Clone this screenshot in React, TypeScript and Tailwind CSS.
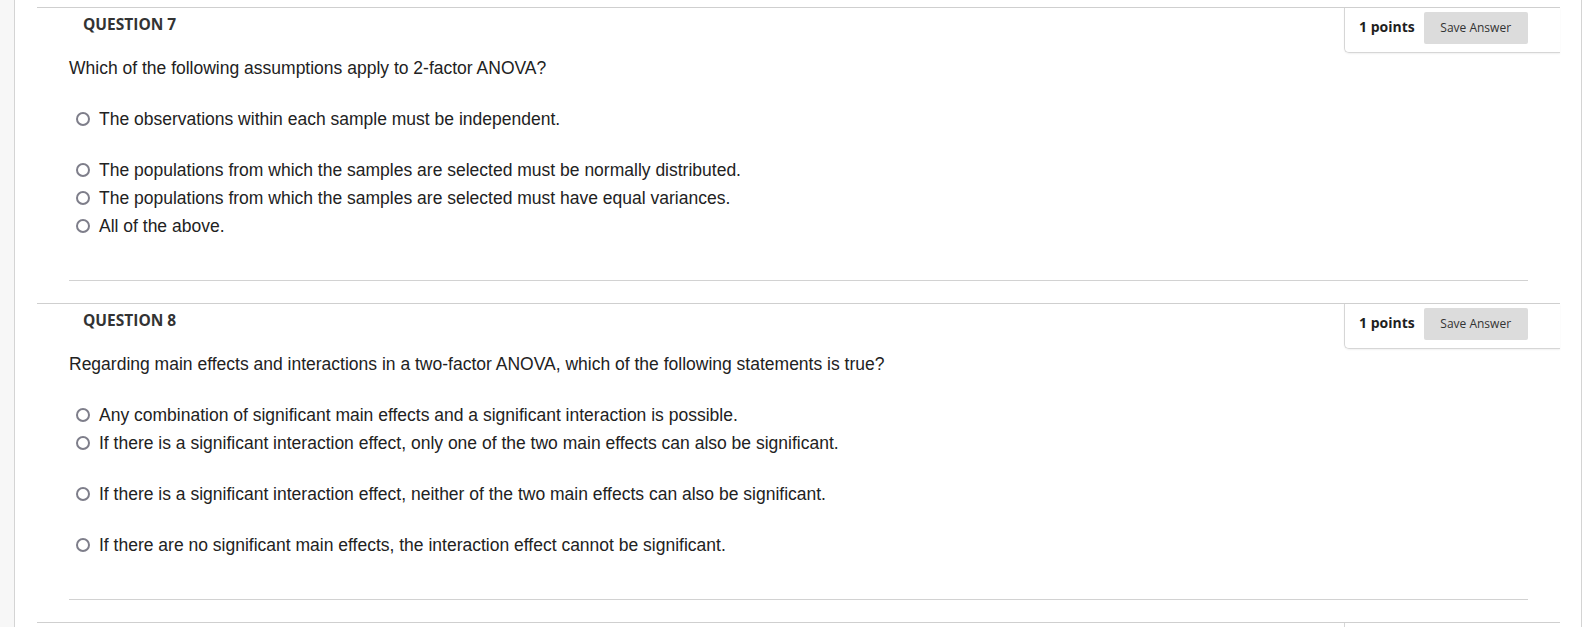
import React from 'react';

type Question = {
  number: number;
  text: string;
  // gapBefore: extra blank space above an option, as in the source markup
  options: { label: string; gapBefore?: boolean }[];
};

const questions: Question[] = [
  {
    number: 7,
    text: 'Which of the following assumptions apply to 2-factor ANOVA?',
    options: [
      { label: 'The observations within each sample must be independent.' },
      { label: 'The populations from which the samples are selected must be normally distributed.', gapBefore: true },
      { label: 'The populations from which the samples are selected must have equal variances.' },
      { label: 'All of the above.' },
    ],
  },
  {
    number: 8,
    text: 'Regarding main effects and interactions in a two-factor ANOVA, which of the following statements is true?',
    options: [
      { label: 'Any combination of significant main effects and a significant interaction is possible.' },
      { label: 'If there is a significant interaction effect, only one of the two main effects can also be significant.' },
      { label: 'If there is a significant interaction effect, neither of the two main effects can also be significant.', gapBefore: true },
      { label: 'If there are no significant main effects, the interaction effect cannot be significant.', gapBefore: true },
    ],
  },
];

function PointsBox() {
  return (
    <div className="h-[45px] w-[216px] border-l border-b border-[#d6d6d6] rounded-bl-[5px] shadow-[0_1px_2px_rgba(0,0,0,0.06)] font-['Open_Sans',sans-serif]">
      <div className="flex items-center h-[32px] mt-[4px]">
        <span className="pl-[14px] pb-[3px] text-[14px] font-bold text-[#1f1f1f]">1 points</span>
        <button className="ml-[9px] w-[104px] h-[32px] bg-[#dcdcdc] rounded-[2px] text-[12px] text-[#333]">
          Save Answer
        </button>
      </div>
    </div>
  );
}

function QuestionBlock({ q }: { q: Question }) {
  return (
    <div className="border-t border-[#cfcfcf] mb-[22px]">
      <div className="flex justify-between items-start">
        <h3 className="pl-[46px] pt-[5px] leading-[22px] text-[15.5px] font-bold text-[#333] font-['Open_Sans',sans-serif]">
          QUESTION {q.number}
        </h3>
        <PointsBox />
      </div>
      <div className="px-[32px] font-['Liberation_Sans',Arial,sans-serif] text-[17.5px] text-[#222]">
        <p className="mt-[5px] leading-[20px]">{q.text}</p>
        <div className="mt-[27px]">
          {q.options.map((o) => (
            <label key={o.label} className={`flex items-center h-[28px] ${o.gapBefore ? 'mt-[23px]' : ''}`}>
              <span className="ml-[7px] w-[14px] h-[14px] rounded-full border-2 border-[#7e7e8a] bg-white shrink-0" />
              <span className="ml-[9px] leading-[20px]">{o.label}</span>
            </label>
          ))}
        </div>
        <div className="mt-[40px] border-t border-[#d2d2d2]" />
      </div>
    </div>
  );
}

export default function App() {
  return (
    <div className="flex h-[627px] w-[1585px] overflow-hidden bg-white">
      <div className="w-[15px] shrink-0 bg-[#f7f7f7] border-r border-[#d4d4d4]" />
      <div className="w-[1566px] shrink-0 pt-[7px] pl-[22px] pr-[21px]">
        {questions.map((q) => (
          <QuestionBlock key={q.number} q={q} />
        ))}
        {/* next question, cut off by the bottom of the window */}
        <div className="border-t border-[#cfcfcf] flex justify-end">
          <div className="h-[45px] w-[216px] border-l border-b border-[#d6d6d6] rounded-bl-[5px]" />
        </div>
      </div>
      <div className="w-[1px] shrink-0 bg-[#d4d4d4]" />
      <div className="flex-1 bg-white" />
    </div>
  );
}
